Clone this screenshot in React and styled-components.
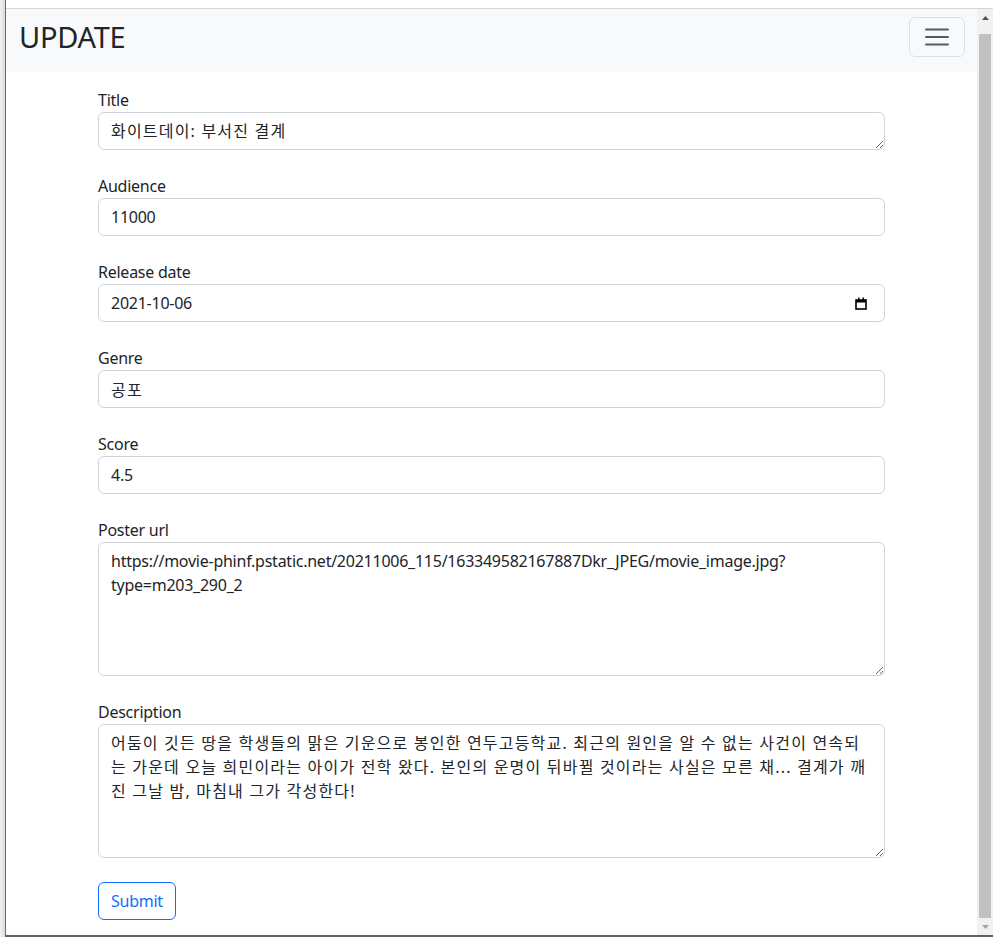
import React from 'react';
import styled, { createGlobalStyle } from 'styled-components';

const GlobalStyle = createGlobalStyle`
    html, body {
        margin: 0;
        padding: 0;
        background: #fff;
    }
    * {
        box-sizing: border-box;
    }
    body {
        font-family: "Noto Sans", "Noto Sans CJK KR", sans-serif;
        letter-spacing: -0.25px;
        color: #212529;
    }
`;

const Screen = styled.div`
    display: flex;
    width: 993px;
    height: 937px;
    overflow: hidden;
`;

const Desktop = styled.div`
    width: 5px;
    background: linear-gradient(to right, #f2f2f2, #dcdcdc);
`;

const Window = styled.div`
    flex: 1;
    display: flex;
    flex-direction: column;
    padding-top: 8px;
    border-left: 1px solid #6b6b6b;
    border-bottom: 2px solid #5f5f5f;
    background: #fff;
`;

const Viewport = styled.div`
    flex: 1;
    min-height: 0;
    display: flex;
    border-top: 1px solid #d6d6d6;
`;

const Page = styled.div`
    flex: 1;
    min-width: 0;
    overflow: hidden;
`;

const Scrollbar = styled.div`
    width: 16px;
    display: flex;
    flex-direction: column;
    align-items: center;
    background: #f1f1f1;
`;

const Arrow = styled.div`
    height: 17px;
    display: flex;
    align-items: center;
    justify-content: center;
    color: ${p => p.$dim ? '#a3a3a3' : '#505050'};
`;

const Thumb = styled.div`
    flex: 1;
    width: 12px;
    margin: 8px 0 0;
    background: #c1c1c1;
`;

const Navbar = styled.nav`
    height: 63px;
    display: flex;
    align-items: flex-start;
    justify-content: space-between;
    padding: 8px 12px 0 13px;
    background: #f8f9fa;
`;

const Brand = styled.span`
    font-size: 29px;
    font-weight: 400;
    line-height: 40px;
    letter-spacing: -0.3px;
    color: #212529;
`;

const Toggler = styled.button`
    width: 56px;
    height: 40px;
    display: flex;
    align-items: center;
    justify-content: center;
    padding: 0;
    background: transparent;
    border: 1px solid rgba(0, 0, 0, 0.1);
    border-radius: 6px;
`;

const Form = styled.form`
    width: 787px;
    margin: 16px auto 0;
    display: flex;
    flex-direction: column;
    gap: 24px;
`;

const Group = styled.div`
    display: flex;
    flex-direction: column;
`;

const Label = styled.label`
    font-size: 16px;
    line-height: 24px;
    color: #212529;
`;

const fieldBase = `
    width: 100%;
    padding: 6px 12px;
    font-family: "Noto Sans", "Noto Sans CJK KR", sans-serif;
    font-size: 16px;
    line-height: 24px;
    color: #212529;
    background: #fff;
    border: 1px solid #ced4da;
    border-radius: 6px;
    outline: none;
`;

const Input = styled.input`
    ${fieldBase};
    height: 38px;
    letter-spacing: ${p => p.$korean ? '1.2px' : '-0.25px'};
`;

const TextArea = styled.textarea`
    ${fieldBase};
    display: block;
    height: ${p => p.$rows * 24 + 14}px;
    resize: vertical;
    letter-spacing: ${p => p.$korean ? '1.2px' : '-0.25px'};
`;

const DateBox = styled.div`
    ${fieldBase};
    height: 38px;
    display: flex;
    align-items: center;
    padding-right: 17px;
`;

const DateValue = styled.input`
    flex: 1;
    min-width: 0;
    padding: 0;
    border: 0;
    outline: none;
    font: inherit;
    letter-spacing: -0.25px;
    color: inherit;
    background: transparent;
`;

const SubmitButton = styled.button`
    align-self: flex-start;
    height: 38px;
    padding: 0 12px;
    font-family: "Noto Sans", sans-serif;
    font-size: 16px;
    letter-spacing: -0.25px;
    color: #0d6efd;
    background: transparent;
    border: 1px solid #0d6efd;
    border-radius: 6px;
`;

const CalendarIcon = () => (
    <svg width="12" height="13" viewBox="0 0 12 13">
        <rect x="1" y="3" width="10" height="9" fill="none" stroke="#000" strokeWidth="1.6" />
        <rect x="1" y="3" width="10" height="2.5" fill="#000" />
        <rect x="3" y="0.5" width="1.5" height="3" fill="#000" />
        <rect x="7.5" y="0.5" width="1.5" height="3" fill="#000" />
    </svg>
);

const HamburgerIcon = () => (
    <svg width="30" height="30" viewBox="0 0 30 30">
        <path d="M4 7.5h22M4 15h22M4 22.5h22" stroke="rgba(33,37,41,0.75)" strokeWidth="2" strokeLinecap="round" />
    </svg>
);

const description = '어둠이 깃든 땅을 학생들의 맑은 기운으로 봉인한 연두고등학교. 최근의 원인을 알 수 없는 사건이 연속되는 가운데 오늘 희민이라는 아이가 전학 왔다. 본인의 운명이 뒤바뀔 것이라는 사실은 모른 채... 결계가 깨진 그날 밤, 마침내 그가 각성한다!';

export default function App() {
    return (
        <>
            <GlobalStyle />
            <Screen>
                <Desktop />
                <Window>
                    <Viewport>
                        <Page>
                            <Navbar>
                                <Brand>UPDATE</Brand>
                                <Toggler type="button" aria-label="Toggle navigation">
                                    <HamburgerIcon />
                                </Toggler>
                            </Navbar>
                            <Form onSubmit={e => e.preventDefault()}>
                                <Group>
                                    <Label>Title</Label>
                                    <TextArea $rows={1} $korean rows={1} defaultValue="화이트데이: 부서진 결계" />
                                </Group>
                                <Group>
                                    <Label>Audience</Label>
                                    <Input type="text" defaultValue="11000" />
                                </Group>
                                <Group>
                                    <Label>Release date</Label>
                                    <DateBox>
                                        <DateValue type="text" defaultValue="2021-10-06" />
                                        <CalendarIcon />
                                    </DateBox>
                                </Group>
                                <Group>
                                    <Label>Genre</Label>
                                    <Input type="text" $korean defaultValue="공포" />
                                </Group>
                                <Group>
                                    <Label>Score</Label>
                                    <Input type="text" defaultValue="4.5" />
                                </Group>
                                <Group>
                                    <Label>Poster url</Label>
                                    <TextArea $rows={5} rows={5} defaultValue="https://movie-phinf.pstatic.net/20211006_115/163349582167887Dkr_JPEG/movie_image.jpg?type=m203_290_2" />
                                </Group>
                                <Group>
                                    <Label>Description</Label>
                                    <TextArea $rows={5} $korean rows={5} defaultValue={description} />
                                </Group>
                                <SubmitButton type="submit">Submit</SubmitButton>
                            </Form>
                        </Page>
                        <Scrollbar>
                            <Arrow>
                                <svg width="7" height="4" viewBox="0 0 7 4"><path d="M0 4L3.5 0L7 4Z" fill="currentColor" /></svg>
                            </Arrow>
                            <Thumb />
                            <Arrow $dim>
                                <svg width="7" height="4" viewBox="0 0 7 4"><path d="M0 0L3.5 4L7 0Z" fill="currentColor" /></svg>
                            </Arrow>
                        </Scrollbar>
                    </Viewport>
                </Window>
            </Screen>
        </>
    );
}
